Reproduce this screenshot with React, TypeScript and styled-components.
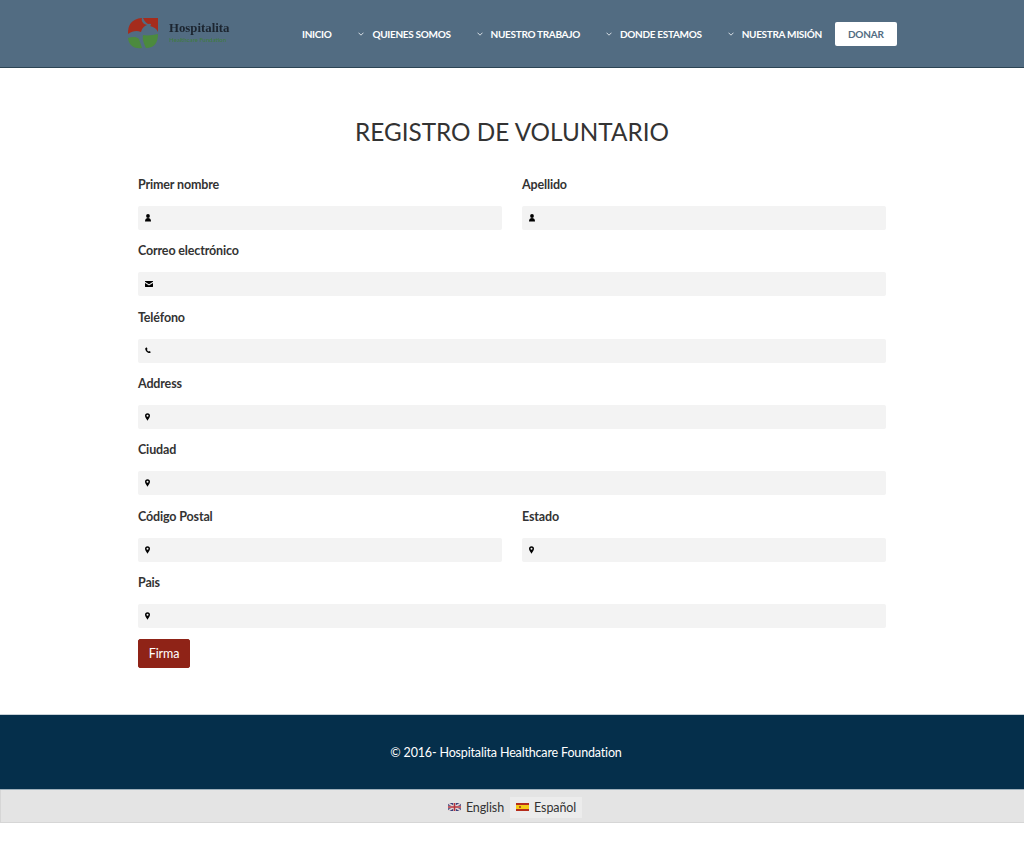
import React from 'react'
import styled, { createGlobalStyle } from 'styled-components'

const GlobalStyle = createGlobalStyle`
  html, body {
    margin: 0;
    padding: 0;
    background: #fff;
    font-family: Lato, "Open Sans", sans-serif;
    color: #333;
  }
  * { box-sizing: border-box; }
`

const Header = styled.header`
  height: 68px;
  background: #526c82;
  border-bottom: 1px solid #2c4454;
  display: flex;
  align-items: center;
  padding: 0 127px;
`

const Logo = styled.div`
  width: 104px;
  height: 32px;
  display: flex;
  align-items: center;
  gap: 10px;
  padding-left: 1px;
  filter: blur(0.35px);
`

const LogoText = styled.div`
  display: flex;
  flex-direction: column;
  margin-top: -3px;
`

const LogoName = styled.span`
  font-family: "Liberation Serif", serif;
  font-size: 12.8px;
  font-weight: 700;
  line-height: 15px;
  color: #1c2530;
`

const LogoSub = styled.span`
  font-size: 6px;
  line-height: 8px;
  color: #3f7d3c;
  white-space: nowrap;
`

const Nav = styled.nav`
  display: flex;
  align-items: center;
  margin-left: 71px;
`

const NavItem = styled.a<{ $gap: number }>`
  display: flex;
  align-items: center;
  gap: 8px;
  margin-right: ${({ $gap }) => $gap}px;
  font-size: 10px;
  font-weight: 700;
  letter-spacing: -0.31px;
  color: #fff;
  white-space: nowrap;
`

const DonateButton = styled.a`
  width: 62px;
  height: 24px;
  display: flex;
  align-items: center;
  justify-content: center;
  background: #fff;
  border-radius: 2px;
  font-size: 10px;
  font-weight: 700;
  letter-spacing: -0.2px;
  color: #526c82;
`

const Main = styled.main`
  padding: 48px 138px 46px;
  height: 646px;
`

const Title = styled.h1`
  margin: 0 0 25px;
  height: 32px;
  font-size: 24.3px;
  line-height: 32px;
  font-weight: 400;
  text-align: center;
  color: #333;
`

const Row = styled.div`
  display: flex;
  gap: 20px;
  margin-bottom: 9.33px;
`

const Field = styled.div`
  flex: 1;
  min-width: 0;
`

const Label = styled.label`
  display: block;
  height: 24px;
  margin-bottom: 9px;
  font-size: 12.5px;
  font-weight: 700;
  letter-spacing: -0.15px;
  line-height: 24.6px;
  color: #333;
`

const InputBox = styled.div`
  height: 24px;
  display: flex;
  align-items: center;
  padding-left: 7px;
  background: #f3f3f3;
  border-radius: 2px;
  color: #000;
`

const SubmitButton = styled.button`
  display: block;
  width: 52px;
  height: 29px;
  margin-top: 11px;
  padding: 0;
  border: 1px solid #8f2317;
  border-radius: 2px;
  background: #8f2317;
  color: #fff;
  font-family: inherit;
  font-size: 12.5px;
  letter-spacing: -0.1px;
`

const Footer = styled.footer`
  height: 76px;
  background: #052f4b;
  border-top: 1px solid #c9d2d8;
  border-bottom: 1px solid #9fb0bb;
  display: flex;
  align-items: center;
  justify-content: center;
  padding-right: 12px;
  color: #fff;
  font-size: 12.5px;
  letter-spacing: -0.16px;
`

const LangBar = styled.div`
  height: 33px;
  background: #e4e4e4;
  border: 1px solid #d6d6d6;
  border-width: 0 0 1px 1px;
  display: flex;
  align-items: center;
  justify-content: center;
  padding: 2px 1px 0 0;
  font-size: 12.5px;
  letter-spacing: -0.1px;
  color: #333;
`

const LangItem = styled.a<{ $active?: boolean }>`
  height: 21px;
  display: flex;
  align-items: center;
  gap: 5px;
  padding: 0 6px;
  background: ${({ $active }) => ($active ? '#ececec' : 'transparent')};
`

type IconKind = 'user' | 'mail' | 'phone' | 'pin'

const Icon = ({ kind }: { kind: IconKind }) => (
  <svg width="8" height="8" viewBox="0 0 8 8" fill="#000">
    {kind === 'user' && (
      <>
        <circle cx="3" cy="2" r="1.9" />
        <path d="M0 7.4C0 5 1.4 4 3 4s3 1 3 3.4z" />
      </>
    )}
    {kind === 'mail' && (
      <>
        <path d="M.3 1h7.4c.2 0 .3.2.3.4v.3L4 4.3 0 1.7v-.3C0 1.2.1 1 .3 1z" />
        <path d="M0 2.9l4 2.5 4-2.5v3.7c0 .2-.1.4-.3.4H.3C.1 7 0 6.800 0 6.600z" />
      </>
    )}
    {kind === 'phone' && (
      <path d="M.3 1.200 1.500.3l1.100 1.700-.7.700c.3.800.8 1.400 1.500 1.800l.8-.6L5.900 5l-.9 1.100C2.600 6.400-.2 3.800.3 1.200z" />
    )}
    {kind === 'pin' && (
      <path
        fillRule="evenodd"
        d="M2.500.3a2.500 2.500 0 0 1 2.500 2.500C5 4.300 3.300 6.300 2.500 7.700 1.700 6.300 0 4.300 0 2.800A2.500 2.500 0 0 1 2.500.3zm0 1.500a1 1 0 1 0 0 2 1 1 0 0 0 0-2z"
      />
    )}
  </svg>
)

const Chevron = () => (
  <svg width="6" height="4" viewBox="0 0 6 4" fill="none" stroke="#e6ebef" strokeWidth="0.9">
    <path d="M.5.7 3 3.200 5.500.7" />
  </svg>
)

const LogoMark = () => (
  <svg width="31" height="31" viewBox="0 0 31 31">
    <path d="M0 16C0 7 3 1 14 0c-1 3 1 6 5 7-3 1-5 3-6 7-4-2-9-1-13 2z" fill="#a52c1c" />
    <path d="M15 0h15v14c-1-3-4-5-8-6 2-1 1-3-1-2-2 0-4-2-6-6z" fill="#a52c1c" />
    <path d="M0 20c4-1 8-2 11 1 1 3 2 6 3 9-6 1-13-1-14-10z" fill="#4c8a3e" />
    <path d="M15 17c5 1 10 0 15-1 0 8-3 14-12 14-2-4-4-9-3-13z" fill="#4c8a3e" />
  </svg>
)

const FlagUk = () => (
  <svg width="13" height="8" viewBox="0 0 13 8">
    <rect width="13" height="8" fill="#39407a" />
    <path d="M0 0l13 8M13 0L0 8" stroke="#e4d6d6" strokeWidth="1.6" />
    <path d="M6.500 0v8M0 4h13" stroke="#e4d6d6" strokeWidth="2.6" />
    <path d="M6.500 0v8M0 4h13" stroke="#b5333c" strokeWidth="1.4" />
  </svg>
)

const FlagEs = () => (
  <svg width="13" height="8" viewBox="0 0 13 8">
    <rect width="13" height="8" fill="#b52c1c" />
    <rect y="2" width="13" height="4" fill="#f5cb16" />
    <rect x="3" y="3" width="2" height="2" fill="#b5561c" />
  </svg>
)

const navItems = [
  { label: 'QUIENES SOMOS', gap: 26 },
  { label: 'NUESTRO TRABAJO', gap: 26 },
  { label: 'DONDE ESTAMOS', gap: 26 },
  { label: 'NUESTRA MISIÓN', gap: 13 },
]

const rows: { label: string; icon: IconKind }[][] = [
  [
    { label: 'Primer nombre', icon: 'user' },
    { label: 'Apellido', icon: 'user' },
  ],
  [{ label: 'Correo electrónico', icon: 'mail' }],
  [{ label: 'Teléfono', icon: 'phone' }],
  [{ label: 'Address', icon: 'pin' }],
  [{ label: 'Ciudad', icon: 'pin' }],
  [
    { label: 'Código Postal', icon: 'pin' },
    { label: 'Estado', icon: 'pin' },
  ],
  [{ label: 'Pais', icon: 'pin' }],
]

const App = () => (
  <>
    <GlobalStyle />
    <Header>
      <Logo>
        <LogoMark />
        <LogoText>
          <LogoName>Hospitalita</LogoName>
          <LogoSub>Healthcare Fundation</LogoSub>
        </LogoText>
      </Logo>
      <Nav>
        <NavItem $gap={27}>INICIO</NavItem>
        {navItems.map((item) => (
          <NavItem key={item.label} $gap={item.gap}>
            <Chevron />
            {item.label}
          </NavItem>
        ))}
        <DonateButton>DONAR</DonateButton>
      </Nav>
    </Header>
    <Main>
      <Title>REGISTRO DE VOLUNTARIO</Title>
      {rows.map((row) => (
        <Row key={row[0].label}>
          {row.map((field) => (
            <Field key={field.label}>
              <Label>{field.label}</Label>
              <InputBox>
                <Icon kind={field.icon} />
              </InputBox>
            </Field>
          ))}
        </Row>
      ))}
      <SubmitButton>Firma</SubmitButton>
    </Main>
    <Footer>© 2016- Hospitalita Healthcare Foundation</Footer>
    <LangBar>
      <LangItem>
        <FlagUk />
        English
      </LangItem>
      <LangItem $active>
        <FlagEs />
        Español
      </LangItem>
    </LangBar>
  </>
)

export default App
